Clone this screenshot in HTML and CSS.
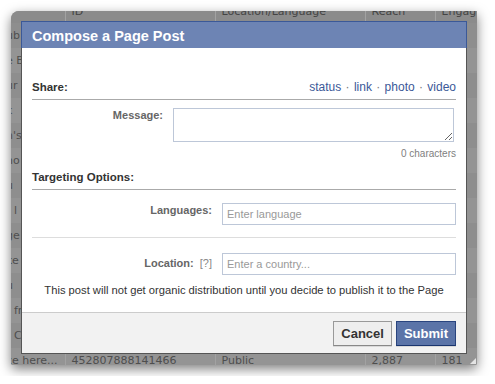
FILE: index.html
```html
<!DOCTYPE html>
<html lang="en">
<head>
    <meta charset="UTF-8">
    <meta name="viewport" content="width=device-width, initial-scale=1.0">
    <title>Compose a Page Post</title>
    <link rel="stylesheet" href="styles.css">
</head>
<body>
    <div class="frame">
        <!-- Page behind the dialog (only the edges show) -->
        <table class="page-table">
            <colgroup>
                <col class="col-msg">
                <col class="col-id">
                <col class="col-loc">
                <col class="col-reach">
                <col class="col-eng">
            </colgroup>
            <thead>
                <tr><th></th><th>ID</th><th>Location/Language</th><th>Reach</th><th>Engag</th></tr>
            </thead>
            <tbody>
                <tr><td>ub</td><td></td><td></td><td></td><td></td></tr>
                <tr><td>e B</td><td></td><td></td><td></td><td></td></tr>
                <tr><td>ur</td><td></td><td></td><td></td><td></td></tr>
                <tr><td>k</td><td></td><td></td><td></td><td></td></tr>
                <tr><td>n's</td><td></td><td></td><td></td><td></td></tr>
                <tr><td>ho</td><td></td><td></td><td></td><td></td></tr>
                <tr><td>u</td><td></td><td></td><td></td><td></td></tr>
                <tr><td>! l</td><td></td><td></td><td></td><td></td></tr>
                <tr><td>ge</td><td></td><td></td><td></td><td></td></tr>
                <tr><td>ke</td><td></td><td></td><td></td><td></td></tr>
                <tr><td>u</td><td></td><td></td><td></td><td></td></tr>
                <tr><td class="indent">fr</td><td></td><td></td><td></td><td></td></tr>
                <tr><td class="indent">C</td><td></td><td></td><td></td><td></td></tr>
                <tr><td>ce here...</td><td>452807888141466</td><td>Public</td><td>2,887</td><td>181</td></tr>
            </tbody>
        </table>

        <!-- Dialog -->
        <div class="dialog">
            <div class="dialog-title">Compose a Page Post</div>
            <div class="dialog-content">
                <div class="dialog-body">
                    <div class="section-head">
                        <span>Share:</span>
                        <span class="share-types"><a href="#">status</a> · <a href="#">link</a> · <a href="#">photo</a> · <a href="#">video</a></span>
                    </div>

                    <div class="message-row">
                        <label class="field-label" for="message">Message:</label>
                        <textarea id="message"></textarea>
                    </div>
                    <div class="char-count">0 characters</div>

                    <div class="section-head targeting">
                        <span>Targeting Options:</span>
                    </div>

                    <div class="field-row languages">
                        <label class="field-label" for="languages">Languages:</label>
                        <input type="text" id="languages" placeholder="Enter language">
                    </div>
                    <div class="field-row location">
                        <label class="field-label" for="location">Location: <span class="help">[?]</span></label>
                        <input type="text" id="location" placeholder="Enter a country...">
                    </div>

                    <p class="notice">This post will not get organic distribution until you decide to publish it to the Page</p>
                </div>
                <div class="dialog-footer">
                    <button class="btn">Cancel</button>
                    <button class="btn btn-primary">Submit</button>
                </div>
            </div>
        </div>
    </div>
</body>
</html>
```

FILE: styles.css
```css
/* General */
body {
    margin: 0;
    background: #fff;
    font-family: "Liberation Sans", Arial, sans-serif;
    font-size: 11px;
    color: #333;
}

/* Frame: the page seen through the dialog's dark border */
.frame {
    position: relative;
    width: 466px;
    height: 354px;
    margin: 11px;
    border-radius: 8px 0 2px 2px;
    overflow: hidden;
    background: #8f8f8f;
    box-shadow: 0 4px 12px rgba(0, 0, 0, 0.5);
}

/* resize grip */
.frame::after {
    content: "";
    position: absolute;
    right: 1px;
    bottom: 1px;
    border-style: solid;
    border-width: 0 0 6px 6px;
    border-color: transparent transparent #e4e4e4 transparent;
}

/* Background table */
.page-table {
    width: 466px;
    margin-top: -11px;
    border-collapse: collapse;
    table-layout: fixed;
    font-family: "DejaVu Sans", sans-serif;
    font-size: 11px;
    color: #4e4e4e;
}

.col-msg { width: 54px; }
.col-id { width: 150px; }
.col-loc { width: 150px; }
.col-reach { width: 70px; }
.col-eng { width: 42px; }

.page-table th,
.page-table td {
    padding: 0 6px;
    text-align: left;
    font-weight: normal;
    white-space: nowrap;
    overflow: hidden;
    border-left: 1px solid #a2a2a2;
}

.page-table th {
    height: 23px;
    background: #8b8b8b;
    color: #444;
}

.page-table td {
    height: 25px;
}

.page-table th:first-child,
.page-table td:first-child {
    padding: 0;
    text-indent: -5px;
    border-left: 0;
}

.page-table td.indent {
    text-indent: 3px;
}

.page-table tbody tr:nth-child(odd) { background: #8e8e8e; }
.page-table tbody tr:nth-child(even) { background: #949494; }

/* Dialog */
.dialog {
    position: absolute;
    top: 10px;
    left: 10px;
    width: 446px;
    height: 333px;
    display: flex;
    flex-direction: column;
}

.dialog-title {
    height: 24px;
    line-height: 24px;
    padding: 2px 10px 0;
    background: #6d84b4;
    border: 1px solid #3b5998;
    border-bottom: 0;
    color: #fff;
    font-size: 14.5px;
    font-weight: bold;
}

.dialog-content {
    flex: 1;
    display: flex;
    flex-direction: column;
    background: #fff;
    border: 1px solid #555;
    border-top: 0;
}

.dialog-body {
    flex: 1;
    padding: 32px 10px 0;
}

/* Section headings */
.section-head {
    display: flex;
    justify-content: space-between;
    align-items: baseline;
    line-height: 14px;
    padding-bottom: 5px;
    border-bottom: 1px solid #aaa;
    font-size: 11.5px;
    font-weight: bold;
    color: #333;
}

.section-head.targeting {
    margin-top: 10px;
}

.share-types {
    font-size: 12px;
    font-weight: normal;
    color: #777;
    word-spacing: 1px;
}

.share-types a {
    color: #3b5998;
    text-decoration: none;
}

/* Fields */
.field-label {
    line-height: 14px;
    text-align: right;
    font-weight: bold;
    color: #666;
}

.help {
    margin-left: 3px;
    font-weight: normal;
    color: #888;
}

.message-row {
    display: grid;
    grid-template-columns: 131px 1fr;
    column-gap: 10px;
    margin-top: 8px;
}

.message-row textarea {
    width: 281px;
    height: 34px;
    box-sizing: border-box;
    margin: 0;
    padding: 3px;
    border: 1px solid #bdc7d8;
    font-family: "Liberation Sans", Arial, sans-serif;
    font-size: 11px;
}

.char-count {
    margin-top: 5px;
    line-height: 13px;
    text-align: right;
    font-size: 10px;
    color: #808080;
}

.field-row {
    display: grid;
    grid-template-columns: 180px 1fr;
    column-gap: 10px;
}

.field-row input {
    height: 22px;
    box-sizing: border-box;
    margin: 0;
    padding: 0 4px;
    border: 1px solid #bdc7d8;
    font-family: "Liberation Sans", Arial, sans-serif;
    font-size: 11px;
    color: #333;
}

.field-row input::placeholder {
    color: #999;
}

.field-row.languages {
    margin-top: 13px;
    padding-bottom: 12px;
    border-bottom: 1px solid #ddd;
}

.field-row.location {
    margin-top: 15px;
}

.field-row.location .field-label {
    padding-top: 3px;
}

.notice {
    margin: 8px 0 0;
    line-height: 14px;
    text-align: center;
    font-size: 11.2px;
    color: #333;
}

/* Footer and buttons */
.dialog-footer {
    display: flex;
    justify-content: flex-end;
    gap: 4px;
    padding: 8px 10px 7px;
    background: #f2f2f2;
    border-top: 1px solid #ccc;
}

.btn {
    height: 25px;
    padding: 0 7px;
    background: #eee;
    border: 1px solid #999;
    border-bottom-color: #888;
    box-shadow: 0 1px 0 rgba(0, 0, 0, 0.1);
    color: #333;
    font-family: "Liberation Sans", Arial, sans-serif;
    font-size: 13px;
    font-weight: bold;
    cursor: pointer;
}

.btn-primary {
    background: #5b74a8;
    border-color: #29447e #29447e #1a356e;
    color: #fff;
}
```
